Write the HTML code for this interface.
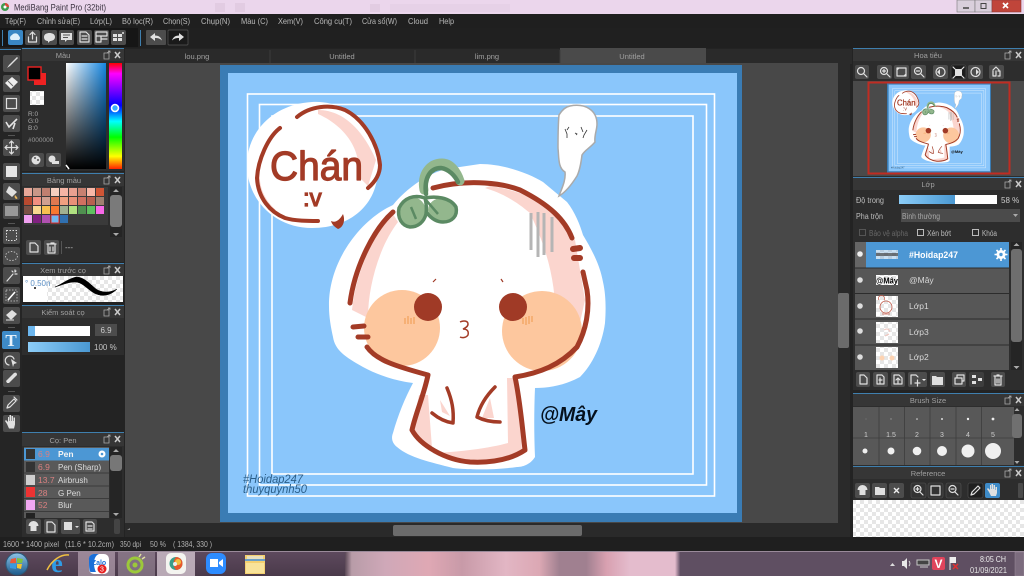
<!DOCTYPE html>
<html><head><meta charset="utf-8"><title>MediBang Paint Pro</title>
<style>
html,body{margin:0;padding:0;background:#232323;width:1024px;height:576px;overflow:hidden}
svg{display:block;position:absolute;left:0;top:0}
text{font-family:"Liberation Sans","DejaVu Sans",sans-serif;font-size:8px;fill:#bdbdbd}
.u{filter:blur(.35px)}
.b{fill:#4c4c4c}
.h{fill:#363636}
.l{fill:#3f7fae}
.t{text-anchor:middle;fill:#a0a0a0;font-size:7.5px}
.i{fill:none;stroke:#e0e0e0;stroke-width:1.200;stroke-linecap:round;stroke-linejoin:round}
.f{fill:#e0e0e0}
.br{fill:none;stroke:#A33B26;stroke-width:5;stroke-linecap:round;stroke-linejoin:round}
.num{fill:#d98080;font-size:8.500px}
.lay{fill:#d8d8d8;font-size:8.500px}
.sz{fill:#ccc;font-size:7px;text-anchor:middle}
.m{fill:#b8b8b8;font-size:8.500px}
</style></head><body>
<svg width="1024" height="576" viewBox="0 0 1024 576" xmlns="http://www.w3.org/2000/svg">
<defs>
<linearGradient id="hue" x1="0" y1="0" x2="0" y2="1">
<stop offset="0" stop-color="#f00"/><stop offset=".1" stop-color="#f0f"/><stop offset=".4" stop-color="#00f"/><stop offset=".55" stop-color="#0ff"/><stop offset=".7" stop-color="#0f0"/><stop offset=".88" stop-color="#ff0"/><stop offset="1" stop-color="#f20"/>
</linearGradient>
<linearGradient id="sat" x1="0" y1="0" x2="1" y2="0"><stop offset="0" stop-color="#fff"/><stop offset="1" stop-color="#1587e2"/></linearGradient>
<linearGradient id="val" x1="0" y1="0" x2="0" y2="1"><stop offset="0" stop-color="#000" stop-opacity="0"/><stop offset="1" stop-color="#000"/></linearGradient>
<linearGradient id="bl" x1="0" y1="0" x2="1" y2="0"><stop offset="0" stop-color="#8ccdf8"/><stop offset="1" stop-color="#4a98d2"/></linearGradient>
<linearGradient id="tb" x1="0" y1="0" x2="0" y2="1"><stop offset="0" stop-color="#5e4a5e"/><stop offset="1" stop-color="#4a3a4a"/></linearGradient>
<linearGradient id="tp" gradientUnits="userSpaceOnUse" x1="345" y1="0" x2="680" y2="0">
<stop offset="0" stop-color="#5a4856"/><stop offset=".02" stop-color="#b89ca8"/><stop offset=".12" stop-color="#cfa8b8"/><stop offset=".25" stop-color="#dfa8b4"/><stop offset=".35" stop-color="#c89aa8"/><stop offset=".48" stop-color="#e2b6c4"/><stop offset=".58" stop-color="#dca8b4"/><stop offset=".64" stop-color="#a08090"/><stop offset=".72" stop-color="#a08090"/><stop offset=".78" stop-color="#d8a0b0"/><stop offset=".85" stop-color="#e4bccd"/><stop offset=".985" stop-color="#e4bccd"/><stop offset="1" stop-color="#66546a"/>
</linearGradient>
<linearGradient id="orb" x1="0" y1="0" x2="0" y2="1"><stop offset="0" stop-color="#8ec4e6"/><stop offset="1" stop-color="#1c5a8c"/></linearGradient>
<pattern id="ck" width="8" height="8" patternUnits="userSpaceOnUse"><rect width="8" height="8" fill="#fff"/><rect width="4" height="4" fill="#e6e6e6"/><rect x="4" y="4" width="4" height="4" fill="#e6e6e6"/></pattern>
<g id="hd"><path d="M0 2h5v6h-5zM3 2l3-2M4 0h2v2" fill="none" stroke="#aaa" stroke-width=".8"/><path d="M11 1l5 6M16 1l-5 6" stroke="#ccc" stroke-width="1.500"/></g>
<g id="art">
<rect x="220" y="65" width="522" height="457" fill="#3A7CB4"/>
<rect x="228" y="73" width="509" height="440" fill="#8AC6FB"/>
<g fill="none" stroke="#fff" stroke-width="1.600">
<rect x="247.500" y="94" width="467" height="402"/>
<rect x="259.500" y="104.500" width="447" height="380.500"/>
<rect x="272" y="116" width="421" height="358"/>
</g>
<!-- speech bubble -->
<path d="M312 102C350 100 378 130 378 168C378 205 350 228 312 228C275 228 247 200 247 165C247 130 275 104 312 102Z" fill="#fff"/>
<path d="M318 110C342 110 362 128 376 160L368 186L358 176C362 150 345 126 318 114Z" fill="#FBD5CE"/>
<path d="M262 160C256 180 262 198 276 210L268 208C255 195 252 175 262 155Z" fill="#FBD5CE"/>
<path class="br" style="stroke-width:4" d="M297 117C310 106 330 104 345 110C365 120 378 145 380 165C380 175 375 182 368 188"/>
<path class="br" style="stroke-width:4" d="M280 128C268 137 258 160 257 178C258 198 270 212 285 218C295 221 308 221 318 221"/>
<path d="M331 221C335 223 339 221 343 214C346 222 342 228 338 229C335 227 332 225 331 221Z" fill="#A33B26"/>
<!-- sticker body -->
<path d="M329 307C328 262 360 220 393 205C405 190 430 170 453 168L480 164C505 164 530 174 543 182L567 202C575 212 580 225 583 235C592 250 600 265 603 282C606 295 606 310 605 323C602 345 592 365 580 377C565 385 550 388 535 388C534 410 534 435 535 457C530 465 522 467 517 467C495 470 470 470 453 468C430 462 410 458 397 447C392 443 391 438 393 433C398 415 405 398 413 383C395 381 378 375 363 367C345 357 335 350 333 337C331 328 329 317 329 307Z" fill="#fff"/>
<!-- shading -->
<path d="M393 214C375 232 356 270 352 310L368 318C368 285 380 245 398 222Z" fill="#FBD5CE"/>
<path d="M490 186C535 192 565 215 575 240L585 300L575 345L555 345C558 295 552 260 530 213C518 203 505 194 485 188Z" fill="#FBD5CE"/>
<path d="M419 395L412 430C420 440 425 445 432 448L428 395Z" fill="#FBD5CE"/>
<path d="M433 453C460 452 490 448 508 443L507 378L517 378L522 450C500 462 455 465 433 453Z" fill="#FBD5CE"/>
<path d="M440 400L450 416L442 412Z M490 398L494 418L482 418Z" fill="#FBD5CE"/>
<!-- cheeks -->
<circle cx="402" cy="328" r="38" fill="#FDC79E"/>
<circle cx="542" cy="331" r="40" fill="#FDC79E"/>
<g stroke="#F09A4C" stroke-width="1" fill="none"><path d="M405 318v6M408 316v8M411 318v6M414 317v7"/><path d="M523 318v6M526 317v8M529 316v8M532 316v6"/></g>
<circle cx="428" cy="307" r="14" fill="#A03A26"/>
<circle cx="513" cy="307" r="14" fill="#A03A26"/>
<path d="M436 279l-3 3M501 279l2 3" stroke="#A03A26" stroke-width="1.200" fill="none"/>
<!-- outlines -->
<path class="br" d="M393 212C375 228 355 265 350 303"/>
<path class="br" d="M353 327L364 326M358 337L368 337"/>
<path class="br" d="M367 347C376 360 395 366 428 375C424 395 416 412 412 430C420 445 445 460 470 462C490 463 510 460 525 450C522 425 520 400 515 377C540 373 560 365 577 347C586 330 590 310 587 290L583 272"/>
<path class="br" d="M572 238C565 220 550 205 520 190C505 184 470 178 433 188"/>
<path class="br" style="stroke-width:6" d="M573 249L580 248M574 258L580 258"/>
<path class="br" style="stroke-width:3.500" d="M447 388C452 400 454 410 453 423C446 422 438 418 432 413"/>
<path class="br" style="stroke-width:3.500" d="M495 387C487 395 480 405 477 417C485 421 493 422 500 422"/>
<path d="M460 322C464 320 468 321 468 324C468 327 465 328 463 329C467 329 469 331 468 335C466 338 462 338 460 337" fill="none" stroke="#A33B26" stroke-width="1.500"/>
<!-- sprout -->
<path d="M424 190C421 174 430 163 442 163C451 163 457 172 460 181" fill="none" stroke="#93B78D" stroke-width="9" stroke-linecap="round"/>
<ellipse cx="412" cy="212" rx="14" ry="15" fill="#93B78D"/>
<ellipse cx="442" cy="210" rx="14" ry="12" fill="#93B78D"/>
<path d="M426 194C424 178 430 168 441 168C449 169 455 176 458 182" fill="none" stroke="#5B8A63" stroke-width="4.500" stroke-linecap="round"/>
<path d="M425 198C414 194 404 198 399 208C397 218 402 226 410 227C418 227 424 222 426 214C427 207 426 202 425 198C435 196 450 197 456 207C458 216 452 222 443 222C436 222 431 218 427 213" fill="none" stroke="#5B8A63" stroke-width="3.500" stroke-linecap="round" stroke-linejoin="round"/>
<path d="M411 207L416 219M426 200L438 214" stroke="#5B8A63" stroke-width="2.500" fill="none"/>
<!-- gray lines -->
<g stroke="#b5b5b5" stroke-width="3" fill="none"><path d="M531 213V250M538 212V257M544 213V255M552 217V252"/></g>
<!-- ghost -->
<path d="M570 106C585 103 597 110 597 124C597 130 594 136 595 142C590 148 585 150 582 155C581 163 580 170 577 176C572 184 566 192 559 196C562 188 566 180 565 172C558 168 559 158 558 148C558 135 558 125 559 115C562 110 565 107 570 106Z" fill="#fff" stroke="#aaa" stroke-width="1.500"/>
<path d="M565 129l2 5v4M569 127l-2 3M581 127l2 5M587 130l-3 5l-1 3M575 133l2 1l-1 1" stroke="#333" stroke-width=".8" fill="none"/>
</g>
</defs>

<!-- base -->
<rect width="1024" height="576" fill="#232323"/>
<rect width="1024" height="14" fill="#EBD6EC"/>
<g class="u" fill="#e2cce2"><rect x="215" y="3" width="10" height="9"/><rect x="235" y="3" width="10" height="9"/><rect x="370" y="4" width="10" height="8"/><rect x="390" y="4" width="120" height="8" opacity=".5"/></g>
<rect y="14" width="1024" height="14" fill="#1f1f1f"/>
<rect y="28" width="1024" height="20" fill="#202020"/>
<circle cx="5" cy="7" r="4" fill="#3f9a4f"/><path d="M5 3a4 4 0 0 1 4 4h-4z" fill="#d64a3a"/><circle cx="5" cy="7" r="1.500" fill="#fff"/>
<text x="14" y="10.500" textLength="92" lengthAdjust="spacingAndGlyphs" style="font-size:9px;fill:#3a3340">MediBang Paint Pro (32bit)</text>
<!-- window buttons -->
<rect x="957" y="0" width="18" height="12" fill="#d9cfdc" stroke="#777" stroke-width=".6"/>
<rect x="975" y="0" width="17" height="12" fill="#d9cfdc" stroke="#777" stroke-width=".6"/>
<rect x="992" y="0" width="29" height="12" fill="#c0453a" stroke="#8a3a3a" stroke-width=".6"/>
<path d="M963 8h6" stroke="#444" stroke-width="1.500"/><rect x="981" y="3.500" width="5" height="5" fill="none" stroke="#444"/>
<path d="M1003 3l5 5M1008 3l-5 5" stroke="#fff" stroke-width="1.700"/>

<g class="u">
<!-- menu -->
<text class="m" x="5" y="24" textLength="21" lengthAdjust="spacingAndGlyphs">Tệp(F)</text>
<text class="m" x="37" y="24" textLength="43" lengthAdjust="spacingAndGlyphs">Chỉnh sửa(E)</text>
<text class="m" x="90" y="24" textLength="22" lengthAdjust="spacingAndGlyphs">Lớp(L)</text>
<text class="m" x="122" y="24" textLength="31" lengthAdjust="spacingAndGlyphs">Bộ lọc(R)</text>
<text class="m" x="163" y="24" textLength="27" lengthAdjust="spacingAndGlyphs">Chọn(S)</text>
<text class="m" x="201" y="24" textLength="29" lengthAdjust="spacingAndGlyphs">Chụp(N)</text>
<text class="m" x="241" y="24" textLength="27" lengthAdjust="spacingAndGlyphs">Màu (C)</text>
<text class="m" x="278" y="24" textLength="25" lengthAdjust="spacingAndGlyphs">Xem(V)</text>
<text class="m" x="314" y="24" textLength="38" lengthAdjust="spacingAndGlyphs">Công cụ(T)</text>
<text class="m" x="362" y="24" textLength="35" lengthAdjust="spacingAndGlyphs">Cửa sổ(W)</text>
<text class="m" x="408" y="24" textLength="20" lengthAdjust="spacingAndGlyphs">Cloud</text>
<text class="m" x="439" y="24" textLength="15" lengthAdjust="spacingAndGlyphs">Help</text>
<!-- toolbar -->
<rect x="0" y="28" width="138" height="19" fill="#161616"/>
<rect x="2" y="30" width="1" height="16" fill="#3f7fae"/>
<rect x="8" y="30" width="15" height="15" rx="2" fill="#3a87c4"/>
<path d="M11 40a3 3 0 0 1 1-5a4 4 0 0 1 7 1a2.500 2.500 0 0 1 0 4z" fill="#dff0fb"/>
<rect class="b" x="25" y="30" width="15" height="15" rx="2"/><path class="i" d="M32.500 32v7M30 34.500l2.500-2.500l2.500 2.500M28.500 37v5h8v-5"/>
<rect class="b" x="42" y="30" width="15" height="15" rx="2"/><path class="f" d="M44 37c0-3 3-4 5.500-4s5.500 1 5.500 4s-3 4-5 4l-2 2v-2c-2 0-4-1-4-4z"/>
<rect class="b" x="59" y="30" width="15" height="15" rx="2"/><path class="f" d="M61 33h11v7h-5l-2 2v-2h-4z"/><path d="M63 35h7M63 37.500h5" stroke="#555" />
<rect class="b" x="77" y="30" width="15" height="15" rx="2"/><path class="i" d="M80 32h6l3 3v7h-9zM82 36h5M82 39h5"/>
<rect class="b" x="94" y="30" width="15" height="15" rx="2"/><path class="i" d="M96 32h11v4h-11zM96 36v6h5v-6M101 39h6"/>
<rect class="b" x="111" y="30" width="15" height="15" rx="2"/><path class="f" d="M113 34h4v3h-4zM118 34h4v3h-4zM113 38h4v3h-4zM118 38h4v3h-4z"/><circle cx="123" cy="33" r="1" class="f"/>
<rect x="140" y="30" width="1" height="16" fill="#3f7fae"/>
<rect class="b" x="146" y="30" width="20" height="15" rx="1"/><path class="f" d="M150 37l5-4v2.500c4 0 6 2 7 5c-2-2-4-2.500-7-2.500v3z"/>
<rect x="168" y="30" width="20" height="15" rx="1" fill="#1a1a1a" stroke="#555" stroke-width=".7"/><path class="f" d="M184 37l-5-4v2.500c-4 0-6 2-7 5c2-2 4-2.500 7-2.500v3z"/>

<!-- left tool strip -->
<rect x="0" y="48" width="22" height="489" fill="#252525"/>
<rect x="0" y="49" width="21" height="1" fill="#3f7fae"/>
<g>
<rect class="b" x="3" y="55" width="17" height="17" rx="2"/><path d="M7 68l2-3l8-8l1 1l-8 8z" class="f"/>
<rect class="b" x="3" y="75" width="17" height="17" rx="2"/><path d="M5 83l7-6l6 5l-7 7z" fill="#eee"/><path d="M8 81l5 5" stroke="#666"/>
<rect class="b" x="3" y="95" width="17" height="17" rx="2"/><rect x="6.500" y="98.500" width="10" height="10" fill="none" stroke="#e0e0e0" stroke-width="1.200"/>
<rect class="b" x="3" y="115" width="17" height="17" rx="2"/><path d="M6 122l3 5l8-8M15 123l-2 6" fill="none" stroke="#e6e6e6" stroke-width="1.600"/>
<rect x="8" y="135" width="7" height="1" fill="#555"/>
<rect class="b" x="3" y="139" width="17" height="17" rx="2"/><path class="i" d="M11.500 141v13M5 147.500h13M9.500 143l2-2l2 2M9.500 152l2 2l2-2M7 145.500l-2 2l2 2M16 145.500l2 2l-2 2"/>
<rect class="b" x="3" y="163" width="17" height="17" rx="2"/><rect x="6" y="166" width="11" height="11" fill="#e6e6e6"/>
<rect class="b" x="3" y="183" width="17" height="17" rx="2"/><path class="f" d="M9 186l8 6l-5 5l-6-5z"/><path d="M15 195c2 2 3 3 2 4c-2 0-3-2-2-4z" fill="#e8b860"/>
<rect class="b" x="3" y="203" width="17" height="16" rx="2"/><rect x="5" y="206" width="13" height="10" fill="#999"/>
<rect x="8" y="223" width="7" height="1" fill="#555"/>
<rect class="b" x="3" y="227" width="17" height="17" rx="2"/><rect x="6.500" y="230.500" width="10" height="10" fill="none" stroke="#ddd" stroke-dasharray="1.500 1.500"/>
<rect class="b" x="3" y="247" width="17" height="18" rx="2"/><ellipse cx="11.500" cy="256" rx="6" ry="4.500" fill="none" stroke="#bbb" stroke-dasharray="1.500 1.500"/>
<rect class="b" x="3" y="267" width="17" height="17" rx="2"/><path class="i" d="M7 281l6-7M15 270v2M12 271l1 1M17 274h-2M16 271l-1 1"/>
<rect class="b" x="3" y="287" width="17" height="17" rx="2"/><rect x="6" y="290" width="11" height="11" fill="none" stroke="#aaa" stroke-dasharray="1.500 1.500"/><path d="M8 300l7-8" stroke="#fff" stroke-width="1.600"/>
<rect class="b" x="3" y="307" width="17" height="17" rx="2"/><path class="f" d="M6 315l6-5l5 4l-6 6z"/><rect x="6" y="319" width="8" height="2" fill="#ccc" opacity=".6"/>
<rect x="8" y="327" width="7" height="1" fill="#555"/>
<rect x="2" y="331" width="18" height="18" rx="2" fill="#3e8bc8"/>
<text x="11" y="346" style="font-family:'Liberation Serif',serif;font-size:17px;font-weight:bold;fill:#e8f2fa;text-anchor:middle">T</text>
<rect class="b" x="3" y="352" width="17" height="17" rx="2"/><path class="i" d="M9 365a4.500 4.500 0 1 1 5-6"/><path class="f" d="M11 359l6 4l-3 1l-1 3z"/>
<rect class="b" x="3" y="370" width="17" height="17" rx="2"/><path class="f" d="M7 383l-1-2l8-8c2-1 3 0 3 2l-8 8z"/>
<rect x="8" y="391" width="7" height="1" fill="#555"/>
<rect class="b" x="3" y="395" width="17" height="17" rx="2"/><path class="i" d="M7 408l1-3l6-6l2 2l-6 6zM14 397l3 3"/>
<rect class="b" x="3" y="415" width="17" height="17" rx="2"/><path class="f" d="M7 424l-2-3l1-1l2 2v-5h1v4h.500v-6h1.500v6h.500v-5h1.500v5h.500v-3.500h1.500v7l-1 4h-5z"/>
</g>

<!-- color panel -->
<rect x="22" y="49" width="102" height="122" fill="#2d2d2d"/>
<rect class="h" x="22" y="49" width="102" height="12"/><rect class="l" x="22" y="48" width="102" height="1"/>
<text class="t" x="63" y="58">Màu</text><use href="#hd" x="104" y="51"/>
<rect x="34" y="73" width="12" height="12" fill="#ee2222"/>
<rect x="28" y="67" width="13" height="13" fill="#000" stroke="#ee2222" stroke-width="1.400"/>
<rect x="30" y="91" width="14" height="14" fill="url(#ck)"/>
<text x="28" y="116" style="font-size:6.500px;fill:#aaa">R:0</text>
<text x="28" y="123" style="font-size:6.500px;fill:#aaa">G:0</text>
<text x="28" y="130" style="font-size:6.500px;fill:#aaa">B:0</text>
<text x="28" y="142" style="font-size:6.500px;fill:#999">#000000</text>
<rect class="b" x="29" y="153" width="15" height="14" rx="2"/><circle cx="36" cy="160" r="4.500" class="f"/><circle cx="35" cy="158" r="1" fill="#555"/><circle cx="38" cy="160" r="1" fill="#555"/>
<rect class="b" x="46" y="153" width="15" height="14" rx="2"/><circle cx="52" cy="159" r="3.500" class="f"/><rect x="52" y="161" width="7" height="3" class="f"/>
<rect x="66" y="63" width="40" height="106" fill="url(#sat)"/><rect x="66" y="63" width="40" height="106" fill="url(#val)"/>
<path d="M66 165l3 4" stroke="#fff" stroke-width="1.500"/>
<rect x="109" y="63" width="13" height="106" fill="url(#hue)"/>
<circle cx="115" cy="108" r="3.500" fill="#3ab0ff" stroke="#fff" stroke-width="1.600"/>

<!-- palette panel -->
<rect x="22" y="172" width="102" height="90" fill="#2d2d2d"/>
<rect class="h" x="22" y="174" width="102" height="12"/><rect class="l" x="22" y="173" width="102" height="1"/>
<text class="t" x="64" y="183">Bảng màu</text><use href="#hd" x="104" y="176"/>
<rect x="24" y="187" width="84" height="38" fill="#3a3a3a"/>
<g>
<rect x="24" y="188" width="8" height="8" fill="#E8A899"/><rect x="33" y="188" width="8" height="8" fill="#C89888"/><rect x="42" y="188" width="8" height="8" fill="#C08070"/><rect x="51" y="188" width="8" height="8" fill="#F5D0C0"/><rect x="60" y="188" width="8" height="8" fill="#F5B5A5"/><rect x="69" y="188" width="8" height="8" fill="#E8A090"/><rect x="78" y="188" width="8" height="8" fill="#C88070"/><rect x="87" y="188" width="8" height="8" fill="#F8B8A8"/><rect x="96" y="188" width="8" height="8" fill="#D05535"/>
<rect x="24" y="197" width="8" height="8" fill="#B84A30"/><rect x="33" y="197" width="8" height="8" fill="#F09080"/><rect x="42" y="197" width="8" height="8" fill="#D0A090"/><rect x="51" y="197" width="8" height="8" fill="#E07850"/><rect x="60" y="197" width="8" height="8" fill="#F0A080"/><rect x="69" y="197" width="8" height="8" fill="#E89078"/><rect x="78" y="197" width="8" height="8" fill="#D07060"/><rect x="87" y="197" width="8" height="8" fill="#B86050"/><rect x="96" y="197" width="8" height="8" fill="#A08070"/>
<rect x="24" y="206" width="8" height="8" fill="#7A5045"/><rect x="33" y="206" width="8" height="8" fill="#F8D890"/><rect x="42" y="206" width="8" height="8" fill="#F8C050"/><rect x="51" y="206" width="8" height="8" fill="#F87830"/><rect x="60" y="206" width="8" height="8" fill="#A0B090"/><rect x="69" y="206" width="8" height="8" fill="#B0E080"/><rect x="78" y="206" width="8" height="8" fill="#509050"/><rect x="87" y="206" width="8" height="8" fill="#60C060"/><rect x="96" y="206" width="8" height="8" fill="#F868E8"/>
<rect x="24" y="215" width="8" height="8" fill="#F0A0F0"/><rect x="33" y="215" width="8" height="8" fill="#802080"/><rect x="42" y="215" width="8" height="8" fill="#B050B0"/><rect x="51" y="215" width="8" height="8" fill="#70B8F0" stroke="#e03030"/><rect x="60" y="215" width="8" height="8" fill="#3070B0"/>
</g>
<rect x="110" y="187" width="12" height="50" fill="#252525"/><rect x="110" y="195" width="12" height="32" rx="3" fill="#7a7a7a"/>
<path d="M116 189l-3 3h6zM116 236l-3-3h6z" fill="#aaa"/>
<rect class="b" x="26" y="240" width="15" height="15" rx="2"/><path class="i" d="M30 243h5l3 3v6h-8z"/>
<rect class="b" x="44" y="240" width="15" height="15" rx="2"/><path class="i" d="M47 244h9M48 245v8h7v-8M51 243h3M50 247v4M53 247v4"/>
<rect x="61" y="241" width="1" height="13" fill="#555"/>
<text x="65" y="250" style="fill:#bbb">---</text>

<!-- brush preview -->
<rect class="h" x="22" y="264" width="102" height="12"/><rect class="l" x="22" y="263" width="102" height="1"/>
<text class="t" x="63" y="273">Xem trước cọ</text><use href="#hd" x="104" y="266"/>
<rect x="23" y="276" width="24" height="26" fill="#fff"/>
<rect x="47" y="276" width="76" height="26" fill="url(#ck)"/>
<text x="25" y="286" style="font-size:8px;fill:#5c8fc4">° 0.50n</text>
<circle cx="35" cy="288" r="1" fill="#111"/>
<path d="M55 287C62 284 68 279 76 277C84 277 90 284 96 289C102 293 110 293 117 289C110 296 102 297 94 293C86 288 82 282 75 282C68 282 62 285 55 287Z" fill="#000" stroke="#000" stroke-width=".5"/>

<!-- brush control -->
<rect x="22" y="305" width="102" height="50" fill="#2d2d2d"/>
<rect class="h" x="22" y="306" width="102" height="12"/><rect class="l" x="22" y="305" width="102" height="1"/>
<text class="t" x="63" y="315">Kiểm soát cọ</text><use href="#hd" x="104" y="308"/>
<rect x="28" y="326" width="62" height="10" fill="#fff"/><rect x="28" y="326" width="7" height="10" fill="#6cb6ee"/>
<rect class="b" x="95" y="324" width="22" height="12"/><text x="106" y="333" style="fill:#ccc;text-anchor:middle">6.9</text>
<rect x="28" y="342" width="62" height="10" fill="url(#bl)"/>
<text x="94" y="350" style="fill:#c4c4c4">100 %</text>

<!-- brush list -->
<rect x="22" y="432" width="102" height="105" fill="#2d2d2d"/>
<rect class="h" x="22" y="433" width="102" height="13"/><rect class="l" x="22" y="432" width="102" height="1"/>
<text class="t" x="63" y="443">Cọ: Pen</text><use href="#hd" x="104" y="435"/>
<rect x="24" y="447" width="85" height="71" fill="#595959"/>
<rect x="24" y="448" width="85" height="12.500" fill="#4C97D4"/>
<path d="M24 473h85M24 486h85M24 498.500h85M24 511.500h85" stroke="#333" stroke-width=".7"/>
<rect x="26" y="449" width="9" height="10" fill="#333"/><text class="num" x="38" y="457">6.9</text><text x="58" y="457" style="fill:#f4f4f4;font-weight:bold;font-size:8.500px">Pen</text>
<circle cx="102" cy="454" r="3.500" fill="#fff"/><circle cx="102" cy="454" r="1.300" fill="#4C97D4"/>
<rect x="26" y="462" width="9" height="10" fill="#333"/><text class="num" x="38" y="470">6.9</text><text x="58" y="470" style="fill:#ddd">Pen (Sharp)</text>
<rect x="26" y="475" width="9" height="10" fill="#cfcfcf"/><text class="num" x="38" y="483">13.7</text><text x="58" y="483" style="fill:#ddd">Airbrush</text>
<rect x="26" y="487" width="9" height="10" fill="#ee3333"/><text class="num" x="38" y="496">28</text><text x="58" y="496" style="fill:#ddd">G Pen</text>
<rect x="26" y="500" width="9" height="10" fill="#f2a8f2"/><text class="num" x="38" y="508">52</text><text x="58" y="508" style="fill:#ddd">Blur</text>
<rect x="26" y="513" width="9" height="5" fill="#222"/>
<rect x="110" y="447" width="12" height="71" fill="#252525"/><rect x="110" y="455" width="12" height="16" rx="3" fill="#777"/>
<path d="M116 449l-3 3h6zM116 516l-3-3h6z" fill="#aaa"/>
<rect class="b" x="26" y="519" width="15" height="15" rx="2"/><path class="f" d="M33.500 521a5 5 0 0 1 5 5h-2v5h-6v-5h-2a5 5 0 0 1 5-5z"/>
<rect class="b" x="44" y="519" width="14" height="15" rx="2"/><path class="i" d="M47 522h5l3 3v7h-8z"/>
<rect class="b" x="61" y="519" width="19" height="15" rx="2"/><rect x="64" y="522" width="8" height="8" fill="#ddd"/><path d="M75 526h4l-2 2z" fill="#ddd"/>
<rect class="b" x="83" y="519" width="14" height="15" rx="2"/><path class="i" d="M86 522h6l2 2v7h-8zM88 526h4M88 529h4"/>
<rect x="114" y="519" width="6" height="15" rx="2" fill="#444"/>

<!-- canvas area -->
<rect x="125" y="49" width="727" height="15" fill="#2a2a2a"/>
<rect x="560" y="48" width="146" height="15" fill="#4a4a4a"/>
<path d="M270 50v13M415 50v13M560 50v13" stroke="#3c3c3c"/>
<text class="t" x="197" y="59">lou.png</text><text class="t" x="342" y="59">Untitled</text><text class="t" x="487" y="59">lim.png</text><text class="t" x="632" y="59">Untitled</text>
<rect x="125" y="63" width="713" height="460" fill="#484848"/>
<rect x="125" y="523" width="713" height="14" fill="#2a2a2a"/>
<rect x="393" y="525" width="189" height="11" rx="2" fill="#6b6b6b"/>
<path d="M130 530l-3 0l3 -2z" fill="#888"/>
<rect x="838" y="63" width="12" height="474" fill="#2a2a2a"/>
<rect x="838" y="293" width="11" height="55" rx="2" fill="#6b6b6b"/>
</g>

<use href="#art"/>
<text x="270" y="180" textLength="93" lengthAdjust="spacingAndGlyphs" style="font-size:41px;fill:#A33B26;stroke:#A33B26;stroke-width:1.200;stroke-linejoin:round">Chán</text>
<text x="303" y="206" style="font-size:24px;fill:#A33B26;stroke:#A33B26;stroke-width:1.200">:v</text>
<text x="540" y="421" textLength="57" lengthAdjust="spacingAndGlyphs" style="font-size:20px;font-weight:bold;font-style:italic;fill:#05101c">@Mây</text>
<text x="243" y="483" textLength="60" lengthAdjust="spacingAndGlyphs" style="font-size:11.500px;font-style:italic;fill:#2B5E88">#Hoidap247</text>
<text x="243" y="493" textLength="64" lengthAdjust="spacingAndGlyphs" style="font-size:11.500px;font-style:italic;fill:#2B5E88">thuyquynh50</text>

<g class="u">
<!-- navigator -->
<rect x="853" y="48" width="171" height="129" fill="#2d2d2d"/>
<rect class="h" x="853" y="49" width="171" height="12"/><rect class="l" x="853" y="48" width="171" height="1"/>
<text class="t" x="928" y="58">Hoa tiêu</text><use href="#hd" x="1005" y="51"/>
<rect class="b" x="855" y="65" width="14" height="14" rx="2"/><circle cx="861" cy="71" r="3.500" class="i"/><path class="i" d="M864 74l3 3"/>
<rect class="b" x="877" y="65" width="15" height="14" rx="2"/><circle cx="884" cy="71" r="3.500" class="i"/><path class="i" d="M887 74l3 3M882.500 71h3M884 69.500v3"/>
<rect class="b" x="894" y="65" width="15" height="14" rx="2"/><path class="i" d="M897 68h9v8h-9zM897 70l2-2M906 74l-2 2"/>
<rect class="b" x="911" y="65" width="15" height="14" rx="2"/><circle cx="918" cy="71" r="3.500" class="i"/><path class="i" d="M921 74l3 3M916.500 71h3"/>
<rect class="b" x="933" y="65" width="15" height="14" rx="2"/><circle cx="940.500" cy="72" r="4.500" class="i"/><path class="f" d="M937 72l3-3v6z"/>
<rect x="951" y="65" width="15" height="14" rx="2" fill="#1c1c1c" stroke="#555" stroke-width=".6"/><rect x="955" y="69" width="7" height="7" class="f"/><path class="i" d="M953 67l2 2M964 67l-2 2M953 78l2-2M964 78l-2-2"/>
<rect class="b" x="968" y="65" width="15" height="14" rx="2"/><circle cx="975.500" cy="72" r="4.500" class="i"/><path class="f" d="M979 72l-3-3v6z"/>
<rect class="b" x="989" y="65" width="15" height="14" rx="2"/><path class="i" d="M993 70l3-3l3 3M993 71v5h3v-5M998 71h2v5h-2"/>
<rect x="853" y="81" width="171" height="95" fill="#4a4a4a"/>
<use href="#art" transform="translate(887 83) scale(.1992 .197) translate(-220 -65)"/>
<text x="897" y="105.500" textLength="18.500" lengthAdjust="spacingAndGlyphs" style="font-size:8px;fill:#A33B26;stroke:#A33B26;stroke-width:.25">Chán</text>
<text x="903" y="110.500" style="font-size:5px;fill:#A33B26">:v</text>
<text x="951" y="153" style="font-size:4px;font-weight:bold;fill:#111">@Mây</text>
<text x="891" y="168.500" style="font-size:2.500px;fill:#2B5E88">#Hoidap247</text>
<rect x="868.500" y="82.500" width="141" height="91" fill="none" stroke="#c02c22" stroke-width="2"/>

<!-- layer -->
<rect x="853" y="177" width="171" height="213" fill="#2d2d2d"/>
<rect class="h" x="853" y="178" width="171" height="12"/><rect class="l" x="853" y="177" width="171" height="1"/>
<text class="t" x="928" y="187">Lớp</text><use href="#hd" x="1005" y="180"/>
<text x="856" y="203" textLength="28" lengthAdjust="spacingAndGlyphs">Độ trong</text>
<rect x="899" y="195" width="98" height="9" fill="#fff"/><rect x="899" y="195" width="56" height="9" fill="url(#bl)"/>
<text x="1001" y="203" style="fill:#ccc">58 %</text>
<text x="856" y="219" textLength="27" lengthAdjust="spacingAndGlyphs">Pha trộn</text>
<rect x="901" y="209" width="119" height="13" fill="#4b4b4b"/><text x="902" y="219" textLength="38" lengthAdjust="spacingAndGlyphs" style="fill:#aaa">Bình thường</text><path d="M1013 214h5l-2.500 3z" fill="#aaa"/>
<rect x="859.500" y="229.500" width="6" height="6" fill="none" stroke="#555"/><text x="869" y="236" textLength="39" lengthAdjust="spacingAndGlyphs" style="fill:#666">Bảo vệ alpha</text>
<rect x="917.500" y="229.500" width="6" height="6" fill="none" stroke="#bbb"/><text x="927" y="236" textLength="24" lengthAdjust="spacingAndGlyphs">Xén bớt</text>
<rect x="972.500" y="229.500" width="6" height="6" fill="none" stroke="#bbb"/><text x="982" y="236" textLength="15" lengthAdjust="spacingAndGlyphs">Khóa</text>
<rect x="855" y="242" width="154" height="128" fill="#575757"/>
<rect x="855" y="242" width="11" height="26" fill="#666"/><rect x="866" y="242" width="143" height="26" fill="#4C97D4"/>
<path d="M855 268h154M855 293.500h154M855 319h154M855 345h154" stroke="#2c2c2c" stroke-width=".9"/>
<circle cx="860" cy="254" r="2.800" fill="#eee"/><circle cx="860" cy="280" r="2.800" fill="#ddd"/><circle cx="860" cy="306" r="2.800" fill="#ddd"/><circle cx="860" cy="331" r="2.800" fill="#ddd"/><circle cx="860" cy="357" r="2.800" fill="#ddd"/>
<rect x="876" y="250" width="22" height="9" fill="url(#ck)" opacity=".7"/><rect x="876" y="253" width="22" height="3" fill="#444" opacity=".7"/>
<rect x="876" y="275" width="22" height="10" fill="url(#ck)"/><text x="876" y="283.500" textLength="22" lengthAdjust="spacingAndGlyphs" style="font-weight:bold;fill:#000">@Mây</text>
<rect x="876" y="296" width="22" height="21" fill="url(#ck)"/><path d="M880 307a6 6 0 1 1 12 0a5 5 0 0 1-12 0M882 314h8M879 300a3 3 0 1 1 5 0" fill="none" stroke="#C25A48" stroke-width=".8"/>
<rect x="876" y="322" width="22" height="21" fill="url(#ck)"/><path d="M884 330c3-2 5-1 6 2M885 336l4-2" stroke="#f0c4bc" fill="none"/>
<rect x="876" y="347" width="22" height="21" fill="url(#ck)"/><circle cx="882" cy="358" r="2.500" fill="#FDD3B2"/><circle cx="892" cy="358" r="2.500" fill="#FDD3B2"/>
<text x="909" y="258" textLength="49" lengthAdjust="spacingAndGlyphs" style="font-size:9px;font-weight:bold;fill:#fff">#Hoidap247</text>
<circle cx="1001" cy="254.500" r="4.500" fill="#fff"/><path d="M1001 248v13M994.500 254.500h13M996.500 250l9 9M1005.500 250l-9 9" stroke="#fff" stroke-width="1.600"/><circle cx="1001" cy="254.500" r="1.700" fill="#4C97D4"/>
<text class="lay" x="909" y="283">@Mây</text><text class="lay" x="909" y="309">Lớp1</text><text class="lay" x="909" y="335">Lớp3</text><text class="lay" x="909" y="360">Lớp2</text>
<rect x="1011" y="242" width="11" height="128" fill="#252525"/><rect x="1011" y="249" width="11" height="93" rx="3" fill="#6e6e6e"/>
<path d="M1016.500 243l-3 3h6zM1016.500 369l-3-3h6z" fill="#aaa"/>
<rect class="b" x="856" y="372" width="14" height="15" rx="2"/><path class="i" d="M860 375h4l3 3v6h-7z"/>
<rect class="b" x="873" y="372" width="15" height="15" rx="2"/><path class="i" d="M877 375h5l2 2v7h-7zM879 380h3M880 378v5"/>
<rect class="b" x="891" y="372" width="14" height="15" rx="2"/><path class="i" d="M894 375h5l3 3v6h-8zM898 383v-4M896 380l2-2l2 2"/>
<rect class="b" x="908" y="372" width="19" height="15" rx="2"/><path class="i" d="M911 375h5l2 2M911 375v9M915 383h5M917.500 380v6"/><path d="M922 379h4l-2 2z" fill="#eee"/>
<rect class="b" x="930" y="372" width="15" height="15" rx="2"/><path class="f" d="M932 376h4l1 1h6v8h-11z"/>
<rect class="b" x="952" y="372" width="14" height="15" rx="2"/><path class="i" d="M955 378h7v6h-7zM957 378v-3h7v6h-2"/>
<rect x="969" y="372" width="15" height="15" rx="2" fill="#3e3e3e"/><rect x="972" y="375" width="4" height="3" class="f"/><rect x="972" y="381" width="4" height="3" class="f"/><rect x="978" y="378" width="4" height="3" class="f"/>
<rect class="b" x="991" y="372" width="14" height="15" rx="2"/><path class="i" d="M994 376h8M995 377v8h6v-8M997 375h2M997 379v4M999 379v4"/>

<!-- brush size -->
<rect class="h" x="853" y="394" width="171" height="12"/><rect class="l" x="853" y="393" width="171" height="1"/>
<text class="t" x="928" y="403">Brush Size</text><use href="#hd" x="1005" y="396"/>
<rect x="853" y="406" width="171" height="60" fill="#2d2d2d"/>
<rect x="853" y="407" width="161" height="58" fill="#585858"/>
<path d="M853 438h161M879 407v58M904.500 407v58M930 407v58M956 407v58M981.500 407v58" stroke="#3e3e3e" stroke-width=".8"/>
<circle cx="866" cy="419" r=".5" fill="#888"/><circle cx="891" cy="419" r=".7" fill="#999"/><circle cx="917" cy="419" r=".8" fill="#ddd"/><circle cx="942" cy="419" r="1" fill="#ddd"/><circle cx="968" cy="419" r="1.200" fill="#eee"/><circle cx="993" cy="419" r="1.400" fill="#eee"/>
<text class="sz" x="866" y="437">1</text><text class="sz" x="891" y="437">1.5</text><text class="sz" x="917" y="437">2</text><text class="sz" x="942" y="437">3</text><text class="sz" x="968" y="437">4</text><text class="sz" x="993" y="437">5</text>
<circle cx="865" cy="451" r="2.500" fill="#f0f0f0"/><circle cx="891" cy="451" r="3.500" fill="#f0f0f0"/><circle cx="917" cy="451" r="4.300" fill="#f0f0f0"/><circle cx="942" cy="451" r="5" fill="#f0f0f0"/><circle cx="968" cy="451" r="6.500" fill="#f0f0f0"/><circle cx="993" cy="451" r="8" fill="#f0f0f0"/>
<rect x="1012" y="414" width="10" height="24" rx="3" fill="#707070"/>
<path d="M1017 408l-2.500 3h5zM1017 464l-2.500-3h5z" fill="#aaa"/>

<!-- reference -->
<rect class="h" x="853" y="467" width="171" height="12"/><rect class="l" x="853" y="466" width="171" height="1"/>
<text class="t" x="928" y="476">Reference</text><use href="#hd" x="1005" y="469"/>
<rect x="853" y="479" width="171" height="21" fill="#2d2d2d"/>
<rect class="b" x="855" y="483" width="15" height="15" rx="2"/><path class="f" d="M862.500 485a5 5 0 0 1 5 5h-2v5h-6v-5h-2a5 5 0 0 1 5-5z"/>
<rect class="b" x="872" y="483" width="15" height="15" rx="2"/><path class="f" d="M875 487h4l1 1h5v7h-10z"/>
<rect class="b" x="889" y="483" width="15" height="15" rx="2"/><path d="M894 488l5 5M899 488l-5 5" stroke="#eee" stroke-width="1.400"/>
<rect x="911" y="483" width="15" height="15" rx="2" fill="#333" stroke="#555" stroke-width=".6"/><circle cx="917.500" cy="489" r="3.500" class="i"/><path class="i" d="M920 492l3 3M916 489h3M917.500 487.500v3"/>
<rect x="928" y="483" width="15" height="15" rx="2" fill="#333" stroke="#555" stroke-width=".6"/><path class="i" d="M931 486h9v9h-9z"/>
<rect x="946" y="483" width="15" height="15" rx="2" fill="#333" stroke="#555" stroke-width=".6"/><circle cx="952.500" cy="489" r="3.500" class="i"/><path class="i" d="M955 492l3 3M951 489h3"/>
<rect x="968" y="483" width="15" height="15" rx="2" fill="#1f1f1f" stroke="#555" stroke-width=".6"/><path class="i" d="M971 495l1-3l6-6l2 2l-6 6z"/>
<rect x="985" y="483" width="15" height="15" rx="2" fill="#3e8bc8"/><path class="f" d="M989 492l-2-3l1-1l2 2v-5h1v4h.500v-5h1.500v5h.500v-4h1.500v5h.500v-3h1.500v6l-1 3h-5z"/>
<rect x="1018" y="483" width="5" height="15" rx="1" fill="#4a4a4a"/>
<rect x="853" y="500" width="171" height="38" fill="url(#ck)"/>
<rect x="853" y="538" width="171" height="13" fill="#232323"/>

<!-- status -->
<rect x="0" y="537" width="1024" height="14" fill="#1f1f1f"/>
<text x="3" y="547" textLength="56" lengthAdjust="spacingAndGlyphs" style="fill:#b0b0b0">1600 * 1400 pixel</text>
<text x="65" y="547" textLength="49" lengthAdjust="spacingAndGlyphs" style="fill:#b0b0b0">(11.6 * 10.2cm)</text>
<text x="120" y="547" textLength="21" lengthAdjust="spacingAndGlyphs" style="fill:#b0b0b0">350 dpi</text>
<text x="150" y="547" textLength="16" lengthAdjust="spacingAndGlyphs" style="fill:#b0b0b0">50 %</text>
<text x="173" y="547" textLength="39" lengthAdjust="spacingAndGlyphs" style="fill:#b0b0b0">( 1384, 330 )</text>
</g>

<!-- taskbar -->
<rect x="0" y="551" width="1024" height="25" fill="url(#tb)"/>
<rect x="0" y="551" width="1024" height="1" fill="#9a8a9a"/>
<rect x="345" y="552" width="335" height="24" fill="url(#tp)"/>
<rect x="680" y="552" width="344" height="24" fill="#5F4F62"/>
<circle cx="17" cy="564" r="11" fill="url(#orb)" stroke="#2a5a7a"/>
<path d="M11 559l5-1v5h-6z" fill="#e85a3a"/><path d="M17 558l6 1-1 4h-5z" fill="#7cc242"/><path d="M10 564h6v5l-6-1z" fill="#3a9ae0"/><path d="M17 564h5l-1 5l-4-1z" fill="#f4c430"/>
<text x="57" y="572" style="font-family:'Liberation Serif',serif;font-size:26px;fill:#2f9be4;text-anchor:middle;font-weight:bold">e</text>
<path d="M47 570c5-10 14-16 22-15" stroke="#f0c040" stroke-width="1.500" fill="none"/>
<rect x="78" y="552" width="37" height="24" fill="#bda9b8" opacity=".65"/>
<rect x="118" y="552" width="37" height="24" fill="#a08f9e" opacity=".6"/>
<rect x="157" y="552" width="38" height="24" fill="#cbbcc8" opacity=".85"/>
<rect x="89" y="554" width="20" height="20" rx="5" fill="#fff"/>
<path d="M89 560a5 5 0 0 1 5-6h5c-6 2-6 12-3 18h-5c-2 0-2-6-2-12z" fill="#1a6fd8"/>
<text x="99" y="565" style="font-size:7px;font-weight:bold;fill:#1a6fd8;text-anchor:middle">Zalo</text>
<circle cx="102" cy="569" r="4.500" fill="#e82020"/><text x="102" y="571.500" style="font-size:7px;fill:#fff;text-anchor:middle">3</text>
<circle cx="135" cy="565" r="7" fill="none" stroke="#9cc83a" stroke-width="3"/><circle cx="135" cy="565" r="2.500" fill="#9cc83a"/><path d="M139 557l2-3M142 559l3-2" stroke="#e0e0a0" stroke-width="1.500"/>
<rect x="166" y="553" width="20" height="21" rx="5" fill="#f4f4f0"/><circle cx="176" cy="563.500" r="6.500" fill="#3a9e8a"/><path d="M176 557a6.500 6.500 0 0 1 0 13a10 10 0 0 1 0-13z" fill="#e8582c"/><circle cx="178" cy="562" r="3" fill="#f0c040"/><circle cx="175" cy="564" r="2" fill="#eee"/>
<rect x="206" y="553" width="20" height="21" rx="6" fill="#2d8cff"/><path d="M210 559h8v8h-8zM219 562l4-3v8l-4-3z" fill="#fff"/>
<path d="M245 555h20v19h-20z" fill="#f4d070"/><path d="M245 560h20" stroke="#6aa0c8" stroke-width="2"/><path d="M246 563h18v10h-18z" fill="#f8e39a"/><rect x="247" y="556" width="16" height="3" fill="#e8e0c0"/>
<path d="M890 566h5l-2.500-3z" fill="#ddd"/>
<path d="M902 561h2l3-3v11l-3-3h-2z" fill="#e8e8e8"/><path d="M909 561a4 4 0 0 1 0 5" stroke="#ddd" fill="none"/>
<path d="M917 560h12v5h-12zM920 567h8" stroke="#c8c8c8" fill="#444" stroke-width="1"/>
<rect x="932" y="557" width="13" height="13" rx="2" fill="#e0445c"/><text x="938.500" y="568" style="font-size:12px;font-weight:bold;fill:#fff;text-anchor:middle">V</text>
<path d="M950 557v13" stroke="#eee"/><path d="M950 557h6v6h-6z" fill="#eee"/><path d="M953 564l5 5M958 564l-5 5" stroke="#e03030" stroke-width="1.500"/>
<text x="993" y="562" textLength="26" lengthAdjust="spacingAndGlyphs" style="font-size:8.500px;fill:#eee;text-anchor:middle">8:05 CH</text>
<text x="970" y="573" textLength="37" lengthAdjust="spacingAndGlyphs" style="font-size:8px;fill:#e4e4e4">01/09/2021</text>
<rect x="1015" y="552" width="9" height="24" fill="#7c6c7e" stroke="#9a8a9a" stroke-width=".5"/>
</svg>
</body></html>
